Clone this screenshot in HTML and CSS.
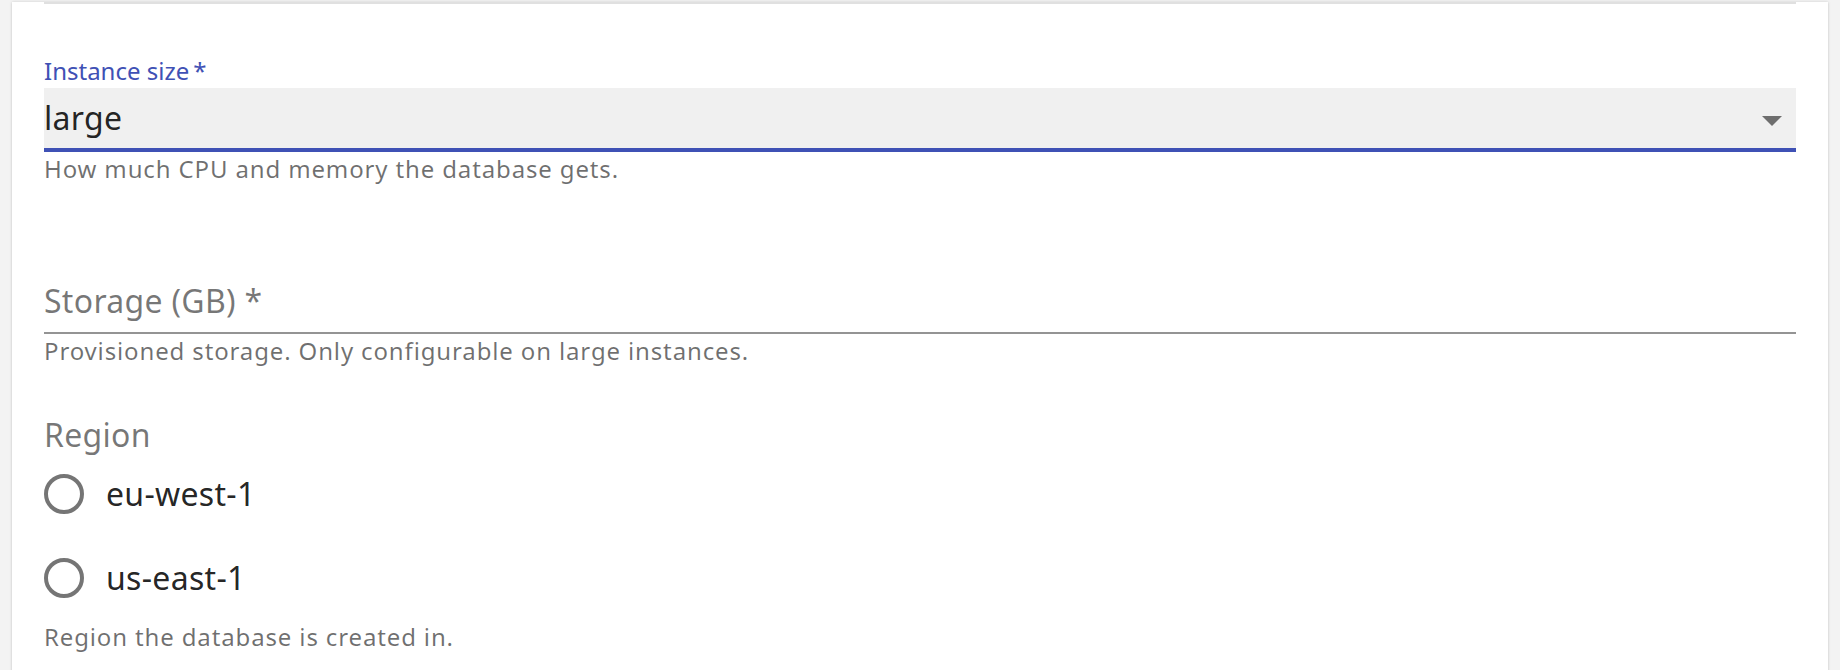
FILE: index.html
```html
<!DOCTYPE html>
<html lang="en">
<head>
<meta charset="utf-8">
<title>Database settings</title>
<link rel="stylesheet" href="styles.css">
</head>
<body>
<div class="page">
  <div class="card">
    <div class="divider"></div>

    <div class="field field-select">
      <label class="shrink-label">Instance size&thinsp;*</label>
      <div class="select">
        <span class="select-value">large</span>
        <svg class="select-icon" viewBox="0 0 24 24" width="48" height="48" aria-hidden="true"><path d="M7 10l5 5 5-5z"/></svg>
      </div>
      <p class="helper">How much CPU and memory the database gets.</p>
    </div>

    <div class="field field-storage">
      <div class="input">
        <span class="placeholder-label">Storage (GB) *</span>
      </div>
      <p class="helper">Provisioned storage. Only configurable on large instances.</p>
    </div>

    <div class="field field-region">
      <div class="group-label">Region</div>
      <div class="radio-group">
        <label class="radio-row">
          <svg class="radio-icon" viewBox="0 0 40 40" width="40" height="40" aria-hidden="true"><circle cx="20" cy="20" r="18"/></svg>
          <span class="radio-text">eu-west-1</span>
        </label>
        <label class="radio-row">
          <svg class="radio-icon" viewBox="0 0 40 40" width="40" height="40" aria-hidden="true"><circle cx="20" cy="20" r="18"/></svg>
          <span class="radio-text">us-east-1</span>
        </label>
      </div>
      <p class="helper">Region the database is created in.</p>
    </div>
  </div>
</div>
</body>
</html>
```

FILE: styles.css
```css
html, body {
  margin: 0;
  padding: 0;
  background: #f3f3f3;
  font-family: "Noto Sans", "Open Sans", sans-serif;
}

.page {
  padding: 0 12px;
  height: 670px;
  overflow: hidden;
}

.card {
  background: #ffffff;
  box-shadow: 0 0 3px rgba(0, 0, 0, 0.14), 0 1px 2px rgba(0, 0, 0, 0.08);
  padding: 0 32px;
  min-height: 700px;
  box-sizing: border-box;
}

.divider {
  margin-top: 2px;
  height: 2px;
  background: #e0e0e0;
}

.field {
  display: flex;
  flex-direction: column;
}

.field-select {
  margin-top: 50px;
}

.shrink-label {
  display: block;
  font-size: 24px;
  line-height: 34px;
  height: 34px;
  color: #3f51b5;
}

.select {
  position: relative;
  height: 60px;
  background: #f0f0f0;
  border-bottom: 4px solid #3f51b5;
}

.select-value {
  display: block;
  font-size: 32px;
  line-height: 60px;
  letter-spacing: 0.3px;
  color: rgba(0, 0, 0, 0.87);
}

.select-icon {
  position: absolute;
  right: 0;
  top: 8px;
  fill: rgba(0, 0, 0, 0.54);
}

.helper {
  margin: 0;
  font-size: 24px;
  line-height: 33px;
  letter-spacing: 0.86px;
  color: rgba(0, 0, 0, 0.56);
}

.field-storage {
  margin-top: 87px;
}

.input {
  height: 60px;
  border-bottom: 2px solid rgba(0, 0, 0, 0.42);
}

.placeholder-label {
  display: block;
  font-size: 32px;
  line-height: 58px;
  letter-spacing: 0.3px;
  color: rgba(0, 0, 0, 0.54);
}

.field-region {
  margin-top: 51px;
}

.group-label {
  font-size: 32px;
  line-height: 34px;
  letter-spacing: 0.3px;
  color: rgba(0, 0, 0, 0.54);
}

.radio-group {
  display: flex;
  flex-direction: column;
}

.radio-row {
  display: flex;
  align-items: center;
  height: 84px;
  gap: 22px;
}

.radio-icon {
  flex: none;
  fill: none;
  stroke: rgba(0, 0, 0, 0.54);
  stroke-width: 4;
}

.radio-text {
  font-size: 32px;
  line-height: 44px;
  letter-spacing: 0.3px;
  color: rgba(0, 0, 0, 0.87);
}
```
